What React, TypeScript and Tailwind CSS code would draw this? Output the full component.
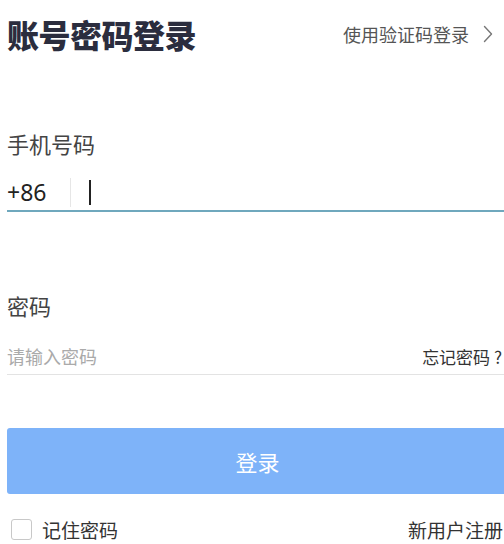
const font = { fontFamily: '"Noto Sans CJK SC", "Noto Sans", sans-serif' };

function ChevronRight() {
    return (
        <svg width="10" height="18" viewBox="0 0 10 18" fill="none" className="ml-[14px]">
            <path d="M1.5 1.5 L8.5 9 L1.5 16.5" stroke="#777" strokeWidth="1.4" strokeLinecap="round" strokeLinejoin="round" />
        </svg>
    );
}

export default function App() {
    return (
        <div className="w-[504px] h-[544px] overflow-hidden bg-white" style={font}>
            <div className="ml-[7px] w-[501px] flex flex-col">
                {/* header */}
                <div className="h-[68px] flex items-center justify-between">
                    <h1 className="text-[32px] font-black leading-none text-[#2b2d3e] tracking-[-0.5px]">账号密码登录</h1>
                    <button className="flex items-center text-[18px] leading-none text-[#555] mr-[15px]">
                        使用验证码登录
                        <ChevronRight />
                    </button>
                </div>

                {/* phone */}
                <div className="mt-[60px] h-[30px] flex items-center text-[22px] leading-none text-[#444]">手机号码</div>
                <div className="mt-[16px] h-[38px] flex items-center border-b-2 border-[#6fa8bd]">
                    <span className="text-[23px] leading-none text-[#222] w-[63px]" style={{ fontFamily: '"Noto Sans", sans-serif' }}>+86</span>
                    <span className="w-px h-[29px] bg-[#e6e6e6]" />
                    <span className="ml-[18px] w-[2px] h-[25px] bg-[#222]" />
                </div>

                {/* password */}
                <div className="mt-[78px] h-[30px] flex items-center text-[22px] leading-none text-[#444]">密码</div>
                <div className="mt-[18px] h-[37px] flex items-center justify-between border-b border-[#e3e3e3]">
                    <span className="text-[18px] leading-none text-[#aaa]">请输入密码</span>
                    <span className="text-[17px] leading-none text-[#333] mr-[6px]">忘记密码 ?</span>
                </div>

                {/* submit */}
                <button className="mt-[53px] h-[66px] w-full rounded-[3px] bg-[#7eb3f9] text-white text-[22px] leading-none">登录</button>

                {/* footer */}
                <div className="mt-[21px] h-[28px] flex items-center justify-between">
                    <label className="flex items-center">
                        <span className="ml-[4px] w-[21px] h-[21px] rounded-[3px] border border-[#c8c8c8] bg-white" />
                        <span className="ml-[10px] text-[19px] leading-none text-[#333]">记住密码</span>
                    </label>
                    <span className="text-[19px] leading-none text-[#333] mr-[5px]">新用户注册</span>
                </div>
            </div>
        </div>
    );
}
